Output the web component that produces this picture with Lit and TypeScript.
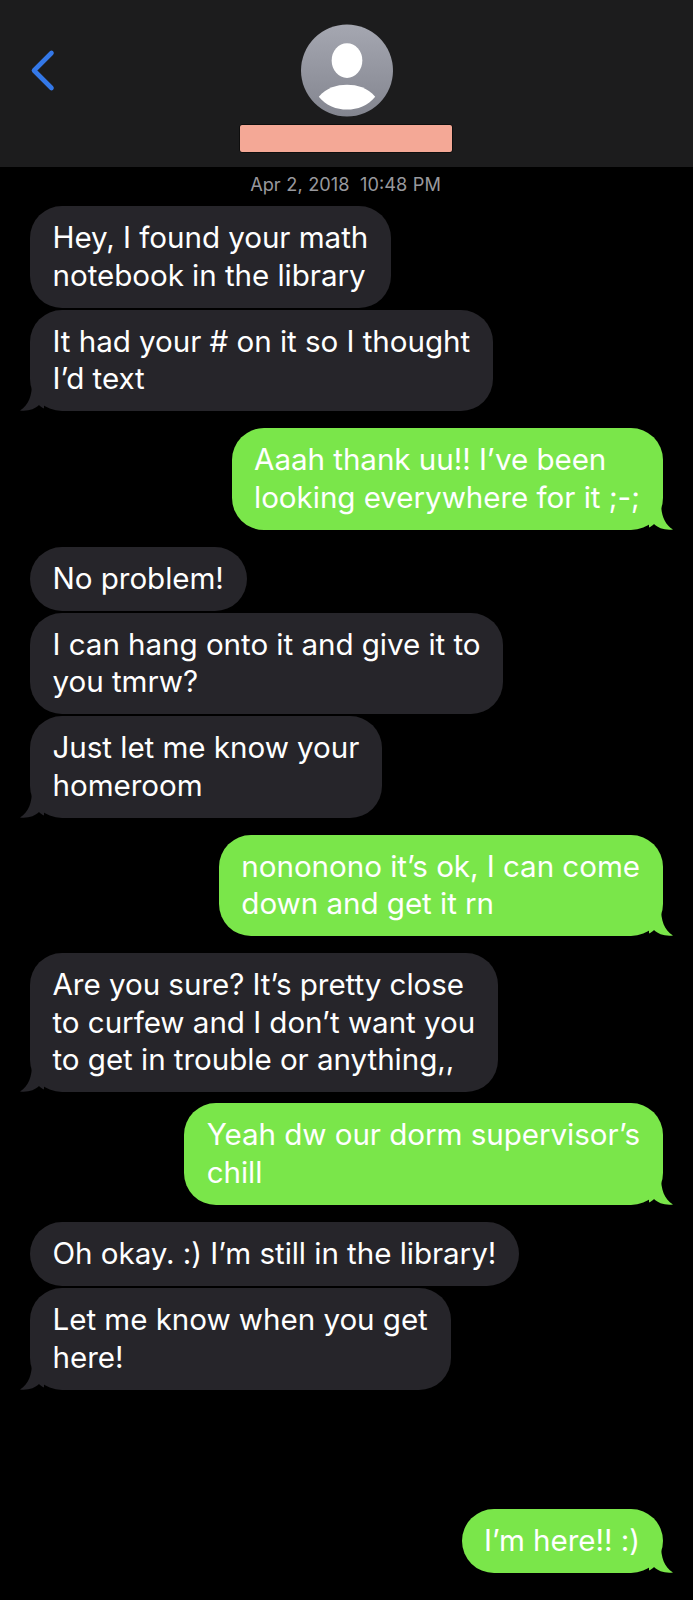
import { LitElement, html, css, svg } from "lit";
import { customElement } from "lit/decorators.js";

type Msg = { me: boolean; lines: string[]; tail?: boolean; gap: number };

const msgs: Msg[] = [
  { me: false, lines: ["Hey, I found your math", "notebook in the library"], gap: 0 },
  { me: false, lines: ["It had your # on it so I thought", "I’d text"], tail: true, gap: 2 },
  { me: true, lines: ["Aaah thank uu!! I’ve been", "looking everywhere for it ;-;"], tail: true, gap: 17 },
  { me: false, lines: ["No problem!"], gap: 17 },
  { me: false, lines: ["I can hang onto it and give it to", "you tmrw?"], gap: 2 },
  { me: false, lines: ["Just let me know your", "homeroom"], tail: true, gap: 2 },
  { me: true, lines: ["nononono it’s ok, I can come", "down and get it rn"], tail: true, gap: 17 },
  { me: false, lines: ["Are you sure? It’s pretty close", "to curfew and I don’t want you", "to get in trouble or anything,,"], tail: true, gap: 17 },
  { me: true, lines: ["Yeah dw our dorm supervisor’s", "chill"], tail: true, gap: 11 },
  { me: false, lines: ["Oh okay. :) I’m still in the library!"], gap: 17.5 },
  { me: false, lines: ["Let me know when you get", "here!"], tail: true, gap: 2 },
  { me: true, lines: ["I’m here!! :)"], tail: true, gap: 119 },
];

@customElement("app-root")
export class AppRoot extends LitElement {
  static styles = css`
    :host {
      display: block;
      width: 693px;
      height: 1600px;
      background: #000;
      overflow: hidden;
      font-family: Inter, "Liberation Sans", sans-serif;
      color: #fff;
    }
    .header {
      height: 167px;
      box-sizing: border-box;
      background: #1c1c1d;
      padding: 24px 0 0;
      display: flex;
      flex-direction: column;
      align-items: center;
      position: relative;
    }
    .back {
      position: absolute;
      left: 29px;
      top: 49px;
      width: 27px;
      height: 43px;
    }
    .avatar {
      width: 92px;
      height: 93px;
      display: block;
    }
    .name {
      width: 212px;
      height: 27px;
      margin: 8px 1px 0 0;
      background: #f4a896;
      border-radius: 2px;
      box-shadow: 0 0 0 0.5px #000;
    }
    .date {
      text-align: center;
      font-size: 18.2px;
      line-height: 22px;
      height: 22px;
      margin-top: 6px;
      color: #98989d;
      letter-spacing: 0;
      word-spacing: 0.5px;
      padding-right: 2px;
    }
    .date span {
      margin-left: 5px;
    }
    .list {
      display: flex;
      flex-direction: column;
      padding: 11px 30px 0;
    }
    .bubble {
      position: relative;
      box-sizing: border-box;
      width: fit-content;
      padding: 13.25px 23px 13.25px 22.5px;
      border-radius: 32px;
      font-size: 29.6px;
      line-height: 37.5px;
      letter-spacing: -0.05px;
      white-space: nowrap;
      background: #26252a;
    }
    .bubble.me {
      align-self: flex-end;
      background: #7ae64a;
    }
    .line {
      display: block;
    }
    .tail {
      position: absolute;
      bottom: 0;
      width: 24px;
      height: 28px;
      display: block;
    }
    .them .tail {
      left: -10px;
      fill: #26252a;
    }
    .me .tail {
      right: -10px;
      fill: #7ae64a;
      transform: scaleX(-1);
    }
  `;

  render() {
    return html`
      <div class="header">
        <svg class="back" viewBox="0 0 27 43">
          <path d="M22.5 4 L5 21.5 L22.5 39" fill="none" stroke="#3478e8" stroke-width="4.6" stroke-linecap="round" stroke-linejoin="round" />
        </svg>
        <svg class="avatar" viewBox="0 0 93 93">
          <defs>
            <linearGradient id="g" x1="0" y1="0" x2="0" y2="1">
              <stop offset="0" stop-color="#a5a7b1" />
              <stop offset="1" stop-color="#83858f" />
            </linearGradient>
          </defs>
          <circle cx="46.5" cy="46.5" r="46.5" fill="url(#g)" />
          <ellipse cx="46.5" cy="36.5" rx="15.5" ry="17.5" fill="#fff" />
          <path d="M18 73 C26 64 36 61 46.5 61 C57 61 67 64 75 73 C68 82 57 86 46.5 86 C36 86 25 82 18 73 Z" fill="#fff" />
        </svg>
        <div class="name"></div>
      </div>
      <div class="date">Apr 2, 2018 <span>10:48 PM</span></div>
      <div class="list">
        ${msgs.map(
          (m) => html`
            <div class="bubble ${m.me ? "me" : "them"}" style="margin-top:${m.gap}px">
              ${m.lines.map((l) => html`<span class="line">${l}</span>`)}
              ${m.tail
                ? svg`<svg class="tail" viewBox="0 0 24 28"><path d="M24 0 L12 0 C12 12 9 22 0 27.5 C8 28.5 15 26 19 22 C21 24 24 26 30 28 L30 0 Z"/></svg>`
                : ""}
            </div>
          `
        )}
      </div>
    `;
  }
}
